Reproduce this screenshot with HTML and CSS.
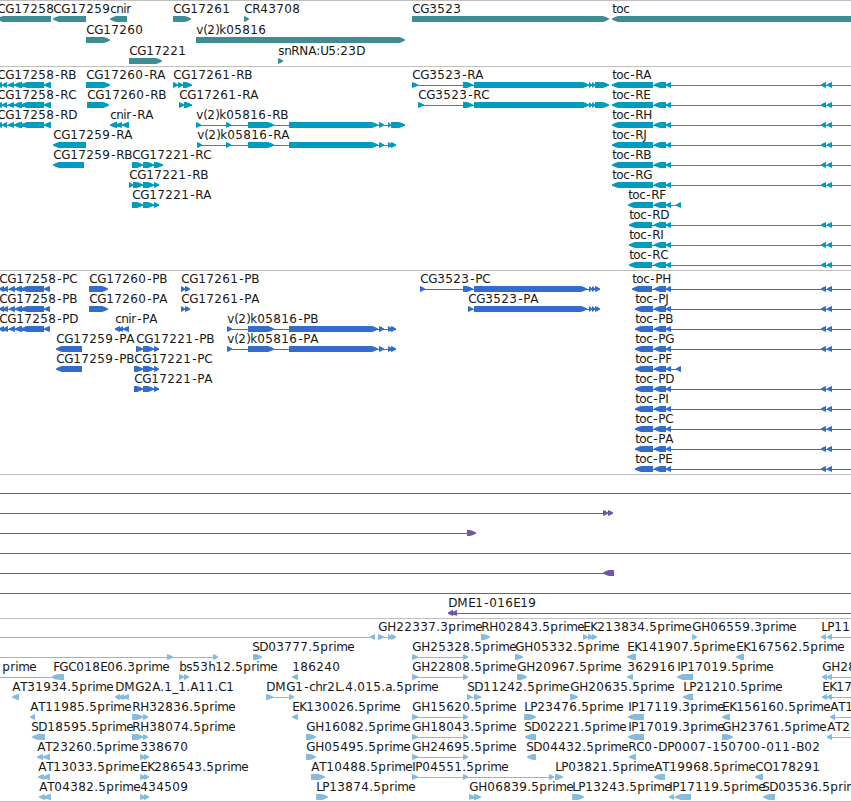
FILE: index.html
```html
<!DOCTYPE html>
<html lang="en">
<head>
  <meta charset="UTF-8">
  <title>Genome Browser</title>
  <link rel="stylesheet" href="styles.css">
</head>
<body>
  <div class="browser">
    <svg class="track genes" id="genes"></svg>
    <svg class="track transcripts" id="transcripts"></svg>
    <svg class="track proteins" id="proteins"></svg>
    <svg class="track bacs" id="bacs"></svg>
    <svg class="track ests" id="ests"></svg>
  </div>
  <script src="tracks.js"></script>
</body>
</html>
```
FILE: styles.css
```css
body {
  margin: 0;
  background-color: #fff;
  overflow: hidden;
}

.browser {
  display: flex;
  flex-direction: column;
  width: 851px;
  height: 801px;
  border-bottom: 1px solid #bebebe;
}

.track {
  display: block;
  box-sizing: border-box;
  width: 100%;
  border-top: 1px solid #bebebe;
  overflow: hidden;
}

.track text {
  font-family: "DejaVu Sans", sans-serif;
  font-size: 12px;
  fill: #161616;
}

.genes {
  height: 66px;
  color: #408c93;
}

.transcripts {
  height: 204px;
  color: #009bbf;
}

.proteins {
  height: 204px;
  color: #326dcd;
}

.bacs {
  height: 144px;
  color: #7455a5;
}

.ests {
  height: 183px;
  color: #87bbdc;
}

.track path,
.track rect {
  fill: currentColor;
}
```
FILE: tracks.js
```js
// advance of each character in a label
const advances = {
  A: 8, B: 8, C: 8, D: 9, E: 7, F: 6, G: 9, H: 9, I: 3, J: 4, K: 7, L: 6, M: 11,
  N: 9, O: 9, P: 7, R: 8, S: 7, T: 7, U: 8, a: 7, b: 7, c: 6, e: 8, h: 7, i: 3,
  k: 7, m: 11, n: 7, o: 7, p: 8, r: 5, s: 6, t: 4, v: 7,
  "(": 4, ")": 4, ".": 4, ":": 4, "-": 6, "_": 6
};

// exons shared between the isoforms
const k05816 = [248, 274, 289, 378, 379, 384];
const tocExons = [654, 666, 666, 671];
const tocEnd = [821, 826, 827, 832, 870, 880];
const leftR = [-3, 2, 2, 7, 8, 14, 14, 22, 21, 44, 44, 51];
const leftP = [-1, 4, 3, 8, 9, 15, 15, 22, 21, 44, 44, 50];
const fasR = [463, 473, 474, 589, 589, 592, 592, 595, 595, 609];
const fasP = [474, 587, 589, 592, 592, 595, 595, 600];
const gh = [412, 418, 463, 468];

// row, label, strand, then start and end of every block
const genes = [
  [0, "CG17258", "<", -3, 51],
  [0, "CG17259", "<", 53, 86],
  [0, "cnir", "<", 110, 127],
  [0, "CG17261", ">", 173, 191],
  [0, "CR43708", ">", 244, 249],
  [0, "CG3523", ">", 412, 609],
  [0, "toc", "<", 612, 880],
  [1, "CG17260", ">", 86, 110],
  [1, "v(2)k05816", ">", 196, 405],
  [2, "CG17221", ">", 129, 162],
  [2, "snRNA:U5:23D", ">", 278, 283]
];

const transcripts = [
  [0, "CG17258-RB", "<", ...leftR],
  [0, "CG17260-RA", ">", 86, 110],
  [0, "CG17261-RB", ">", 173, 178, 178, 183, 183, 192],
  [0, "CG3523-RA", ">", 412, 418, ...fasR],
  [1, "CG17258-RC", "<", ...leftR],
  [1, "CG17260-RB", ">", 87, 109],
  [1, "CG17261-RA", ">", 179, 184, 184, 192],
  [1, "CG3523-RC", ">", 418, 424, ...fasR],
  [2, "CG17258-RD", "<", ...leftR],
  [2, "cnir-RA", "<", 110, 117, 116, 122, 122, 129],
  [2, "v(2)k05816-RB", ">", 196, 201, 226, 231, ...k05816, 388, 391, 391, 405],
  [3, "CG17259-RA", "<", 53, 86],
  [3, "v(2)k05816-RA", ">", 197, 202, 226, 231, ...k05816, 388, 392, 391, 396],
  [4, "CG17259-RB", "<", 53, 84],
  [4, "CG17221-RC", ">", 132, 143, 143, 154, 154, 163],
  [5, "CG17221-RB", ">", 129, 133, 133, 143, 143, 154, 154, 159],
  [6, "CG17221-RA", ">", 132, 143, 143, 154, 154, 159],
  [6, "toc-RF", "<", 628, 653, ...tocExons, 676, 681]
];
["RA", "RE", "RH", "RJ", "RB", "RG"].forEach((name, i) => {
  transcripts.push([i, "toc-" + name, "<", 612, 653, ...tocExons, ...tocEnd]);
});
["RD", "RI", "RC"].forEach((name, i) => {
  transcripts.push([i + 7, "toc-" + name, "<", 629, 652, ...tocExons, ...tocEnd]);
});

const proteins = [
  [0, "CG17258-PC", "<", ...leftP],
  [0, "CG17260-PB", ">", 89, 108],
  [0, "CG17261-PB", ">", 181, 185, 185, 190],
  [0, "CG3523-PC", ">", 420, 425, 463, 473, ...fasP],
  [0, "toc-PH", "<", 632, 652, ...tocExons, ...tocEnd],
  [1, "CG17258-PB", "<", ...leftP],
  [1, "CG17260-PA", ">", 89, 108],
  [1, "CG17261-PA", ">", 181, 185, 185, 190],
  [1, "CG3523-PA", ">", 468, 473, ...fasP],
  [2, "CG17258-PD", "<", ...leftP],
  [2, "cnir-PA", "<", 115, 120, 119, 123, 123, 129],
  [2, "v(2)k05816-PB", ">", 227, 232, ...k05816, 388, 392, 391, 396],
  [3, "CG17259-PA", "<", 56, 82],
  [3, "CG17221-PB", ">", 136, 143, 143, 154, 154, 159],
  [3, "v(2)k05816-PA", ">", 227, 232, ...k05816, 388, 392, 391, 396],
  [4, "CG17259-PB", "<", 56, 82],
  [4, "CG17221-PC", ">", 134, 143, 143, 154, 154, 159],
  [4, "toc-PF", "<", 635, 653, ...tocExons, 676, 681],
  [5, "CG17221-PA", ">", 134, 143, 143, 154, 154, 159]
];
["PJ", "PB", "PG", "", "PD", "PI", "PC", "PA", "PE"].forEach((name, i) => {
  if (name) proteins.push([i + 1, "toc-" + name, "<", 635, 653, ...tocExons, ...tocEnd]);
});

const bacs = [
  [0, "", ">", -20, -10, 870, 880],
  [1, "", ">", -20, -10, 603, 608, 608, 613],
  [2, "", ">", -20, -10, 467, 476],
  [3, "", ">", -20, -10, 870, 880],
  [4, "", "<", -20, -10, 603, 614],
  [5, "", ">", -20, -10, 870, 880],
  [6, "DME1-016E19", "<", 448, 453, 452, 457, 870, 880]
];

// a label that does not start at its first block has @x after it
const ests = [
  [0, "", "<", -20, -10, 370, 375],
  [0, "GH22337.3prime", ">", 378, 384, 388, 392, 391, 396],
  [0, "RH02843.5prime", ">", 481, 490],
  [0, "EK213834.5prime", ">", 583, 588, 588, 593, 592, 597],
  [0, "GH06559.3prime", ">", 692, 697],
  [0, "LP11", "<", 821, 826, 827, 832, 870, 880],
  [1, "", ">", -20, -10, 167, 173, 213, 218],
  [1, "SD03777.5prime@252", ">", 253, 262],
  [1, "GH25328.5prime", ">", ...gh],
  [1, "GH05332.5prime", ">", 515, 523],
  [1, "EK141907.5prime", "<", 627, 636],
  [1, "EK167562.5prime", "<", 736, 744],
  [2, "prime@2", "<", -20, -10, 52, 57],
  [2, "FGC018E06.3prime", "<", 53, 64],
  [2, "bs53h12.5prime", ">", 179, 184, 184, 189],
  [2, "186240", "<", 292, 298],
  [2, "GH22808.5prime", ">", ...gh],
  [2, "GH20967.5prime", ">", 517, 527],
  [2, "362916", "<", 627, 633],
  [2, "IP17019.5prime", "<", 677, 693],
  [2, "GH28", "<", 822, 827, 827, 832, 870, 880],
  [3, "AT31934.5prime", "<", 12, 19],
  [3, "DMG2A.1_1.A11.C1", "<", 115, 120, 119, 124, 123, 129],
  [3, "DMG1-chr2L.4.015.a.5prime", ">", 266, 273, 289, 294],
  [3, "SD11242.5prime", ">", 467, 472, 474, 481],
  [3, "GH20635.5prime", ">", 570, 578],
  [3, "LP21210.5prime", "<", 683, 693],
  [3, "EK17", "<", 822, 827, 827, 832, 870, 880],
  [4, "AT11985.5prime", "<", 30, 35],
  [4, "RH32836.5prime", ">", 132, 143, 143, 148],
  [4, "EK130026.5prime", "<", 292, 298],
  [4, "GH15620.5prime", ">", ...gh],
  [4, "LP23476.5prime", ">", 524, 536],
  [4, "IP17119.3prime", "<", 628, 644],
  [4, "EK156160.5prime", "<", 722, 730],
  [4, "AT1", "<", 830, 835, 870, 880],
  [5, "SD18595.5prime@31", "<", 32, 45],
  [5, "RH38074.5prime", ">", 132, 143, 143, 148],
  [5, "GH16082.5prime", ">", 306, 316],
  [5, "GH18043.5prime", ">", ...gh],
  [5, "SD02221.5prime@524", "<", 525, 536],
  [5, "IP17019.3prime", "<", 628, 644],
  [5, "GH23761.5prime", ">", 722, 733],
  [5, "AT2", "<", 827, 832, 870, 880],
  [6, "AT23260.5prime", "<", 37, 43, 43, 50],
  [6, "338670", ">", 140, 145, 144, 149],
  [6, "GH05495.5prime", ">", 306, 316],
  [6, "GH24695.5prime", ">", ...gh],
  [6, "SD04432.5prime@526", "<", 527, 536],
  [6, "RC0-DP0007-150700-011-B02@628", "<", 629, 636],
  [7, "AT13033.5prime", "<", 38, 44, 43, 50],
  [7, "EK286543.5prime", ">", 140, 145, 144, 149],
  [7, "AT10488.5prime", ">", 311, 325],
  [7, "IP04551.5prime", ">", ...gh, 549, 554],
  [7, "LP03821.5prime", ">", 555, 563],
  [7, "AT19968.5prime", "<", 654, 665],
  [7, "CO178291", "<", 755, 763],
  [8, "AT04382.5prime", "<", 39, 45, 44, 51],
  [8, "434509", ">", 140, 145, 144, 149],
  [8, "LP13874.5prime", ">", 316, 328],
  [8, "GH06839.5prime", ">", 469, 475, 474, 481],
  [8, "LP13243.5prime", ">", 572, 584],
  [8, "IP17119.5prime", "<", 669, 674, 675, 691],
  [8, "SD03536.5prime@762", "<", 763, 775]
];

function charPositions(label, x) {
  return [...label].map(c => {
    // the hyphen glyph is narrow, so center it in its cell
    const pos = c === "-" ? x + 1 : x;
    x += advances[c] || 8;
    return pos;
  }).join(" ");
}

function block(x1, x2, y, strand) {
  const tip = Math.min(6, x2 - x1);
  const half = tip / 2;
  if (strand === ">") {
    return `M${x1} ${y}H${x2 - tip}L${x2 - half} ${y + 1}L${x2} ${y + 2.5}V${y + 3.5}L${x2 - half} ${y + 5}L${x2 - tip} ${y + 6}H${x1}Z`;
  }
  return `M${x2} ${y}H${x1 + tip}L${x1 + half} ${y + 1}L${x1} ${y + 2.5}V${y + 3.5}L${x1 + half} ${y + 5}L${x1 + tip} ${y + 6}H${x2}Z`;
}

function drawTrack(id, features, rowHeight) {
  let out = "";
  features.forEach(([row, name, strand, ...pos]) => {
    const y = 15 + row * rowHeight;
    const [label, labelX] = name.split("@");
    const start = pos[0];
    const end = pos[pos.length - 1];
    if (pos.length > 2) {
      out += `<rect x="${start}" y="${y + 3}" width="${end - start}" height="1"/>`;
    }
    let d = "";
    for (let i = 0; i < pos.length; i += 2) {
      d += block(pos[i], pos[i + 1], y, strand);
    }
    out += `<path d="${d}"/>`;
    if (label) {
      out += `<text x="${charPositions(label, Number(labelX || start) + 0.25)}" y="${y - 3}">${label}</text>`;
    }
  });
  document.getElementById(id).innerHTML = out;
}

drawTrack("genes", genes, 21);
drawTrack("transcripts", transcripts, 20);
drawTrack("proteins", proteins, 20);
drawTrack("bacs", bacs, 20);
drawTrack("ests", ests, 20);
```
